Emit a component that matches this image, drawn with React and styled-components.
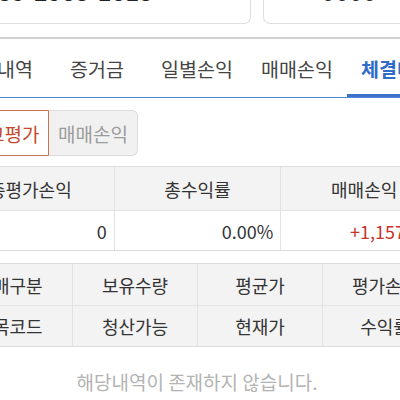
import React from 'react';
import styled, {createGlobalStyle, css} from 'styled-components';

const Global = createGlobalStyle`
  html, body {
    margin: 0;
    padding: 0;
    background: #FFFFFF;
    overflow: hidden;
  }
  body {
    font-family: 'Noto Sans CJK KR', 'Noto Sans', sans-serif;
    color: #333;
  }
`;

// the screenshot is a 400px window onto a wider page that is scrolled
const Page = styled.div`
  width: 500px;
  margin: -32px 0 0 -53px;
`;

const CardRow = styled.div`
  display: flex;
  gap: 12px;
  padding: 0 12px 13px;
`;

const Card = styled.div`
  flex: ${p => p.$grow};
  height: 56px;
  box-sizing: border-box;
  border: 1px solid #dedede;
  border-top: none;
  border-radius: 0 0 7px 7px;
  display: flex;
  align-items: flex-end;
  justify-content: ${p => (p.$center ? 'center' : 'flex-start')};
  padding: 0 10px 15px;
  font-size: 24px;
  line-height: 30px;
  color: #222;
  font-family: 'Liberation Sans', 'Noto Sans CJK KR', sans-serif;
  letter-spacing: 0.5px;
`;

const TabBar = styled.div`
  display: flex;
  border-top: 2px solid #d2d2d2;
  border-bottom: 1px solid #5387d6;
`;

const Tab = styled.div`
  flex: 0 0 100px;
  height: 58px;
  display: flex;
  align-items: center;
  justify-content: center;
  font-size: 19.5px;
  color: #444;
  white-space: nowrap;
  ${p => p.$active && css`
    color: #2f6cc6;
    font-weight: 700;
    box-shadow: inset 0 -3px 0 #3a72c9;
  `}
`;

const Segment = styled.div`
  display: flex;
  padding: 12px 13px 10px;
`;

const SegButton = styled.div`
  width: 89px;
  height: 46px;
  box-sizing: border-box;
  display: flex;
  align-items: center;
  justify-content: center;
  font-size: 19px;
  ${p => p.$active ? css`
    border: 1px solid #c77356;
    color: #c2472b;
    background: #fff;
    border-radius: 6px 0 0 6px;
  ` : css`
    border: 1px solid #dcdcdc;
    border-left: none;
    color: #9c9c9c;
    background: #f1f1f1;
    border-radius: 0 6px 6px 0;
  `}
`;

const Table = styled.div`
  display: grid;
  grid-template-columns: repeat(${p => p.$cols}, 1fr);
  border-top: 1px solid #dcdcdc;
  border-bottom: 1px solid #dcdcdc;
  margin-bottom: ${p => p.$gap || 0}px;
`;

const Cell = styled.div`
  height: ${p => p.$h}px;
  box-sizing: border-box;
  display: flex;
  align-items: center;
  justify-content: ${p => (p.$right ? 'flex-end' : 'center')};
  padding: 0 7px;
  font-size: 18px;
  white-space: nowrap;
  overflow: hidden;
  background: ${p => (p.$head ? '#f3f3f3' : '#fff')};
  color: ${p => p.$color || '#333'};
  border-left: 1px solid #e2e2e2;
  border-top: ${p => (p.$divide ? '1px solid #e4e4e4' : 'none')};
  &:nth-child(${p => p.$cols}n + 1) {
    border-left: none;
  }
`;

const Empty = styled.p`
  margin: 22px 0 0;
  text-align: center;
  font-size: 19px;
  line-height: 26px;
  color: #b3b3b3;
`;

const tabs = ['잔고내역', '증거금', '일별손익', '매매손익', '체결내역'];
const summaryHead = ['총평가손익', '총수익률', '매매손익'];
const detailRows = [
  ['매매구분', '보유수량', '평균가', '평가손익'],
  ['종목코드', '청산가능', '현재가', '수익률'],
];

export default function App() {
  return (
    <>
      <Global />
      <Page>
        <CardRow>
          <Card $grow="0 0 292px">1239-2965-1615</Card>
          <Card $grow="1" $center>0000</Card>
        </CardRow>

        <TabBar>
          {tabs.map((t, i) => (
            <Tab key={t} $active={i === 4}>{t}</Tab>
          ))}
        </TabBar>

        <Segment>
          <SegButton $active>잔고평가</SegButton>
          <SegButton>매매손익</SegButton>
        </Segment>

        <Table $cols={3} $gap={12}>
          {summaryHead.map(h => (
            <Cell key={h} $cols={3} $h={43} $head>{h}</Cell>
          ))}
          <Cell $cols={3} $h={40} $right $divide>0</Cell>
          <Cell $cols={3} $h={40} $right $divide>0.00%</Cell>
          <Cell $cols={3} $h={40} $right $divide $color="#c8322c">+1,157,000</Cell>
        </Table>

        <Table $cols={4}>
          {detailRows.map((row, r) =>
            row.map(c => (
              <Cell key={c} $cols={4} $h={41} $head $divide={r > 0}>{c}</Cell>
            ))
          )}
        </Table>

        <Empty>해당내역이 존재하지 않습니다.</Empty>
      </Page>
    </>
  );
}
